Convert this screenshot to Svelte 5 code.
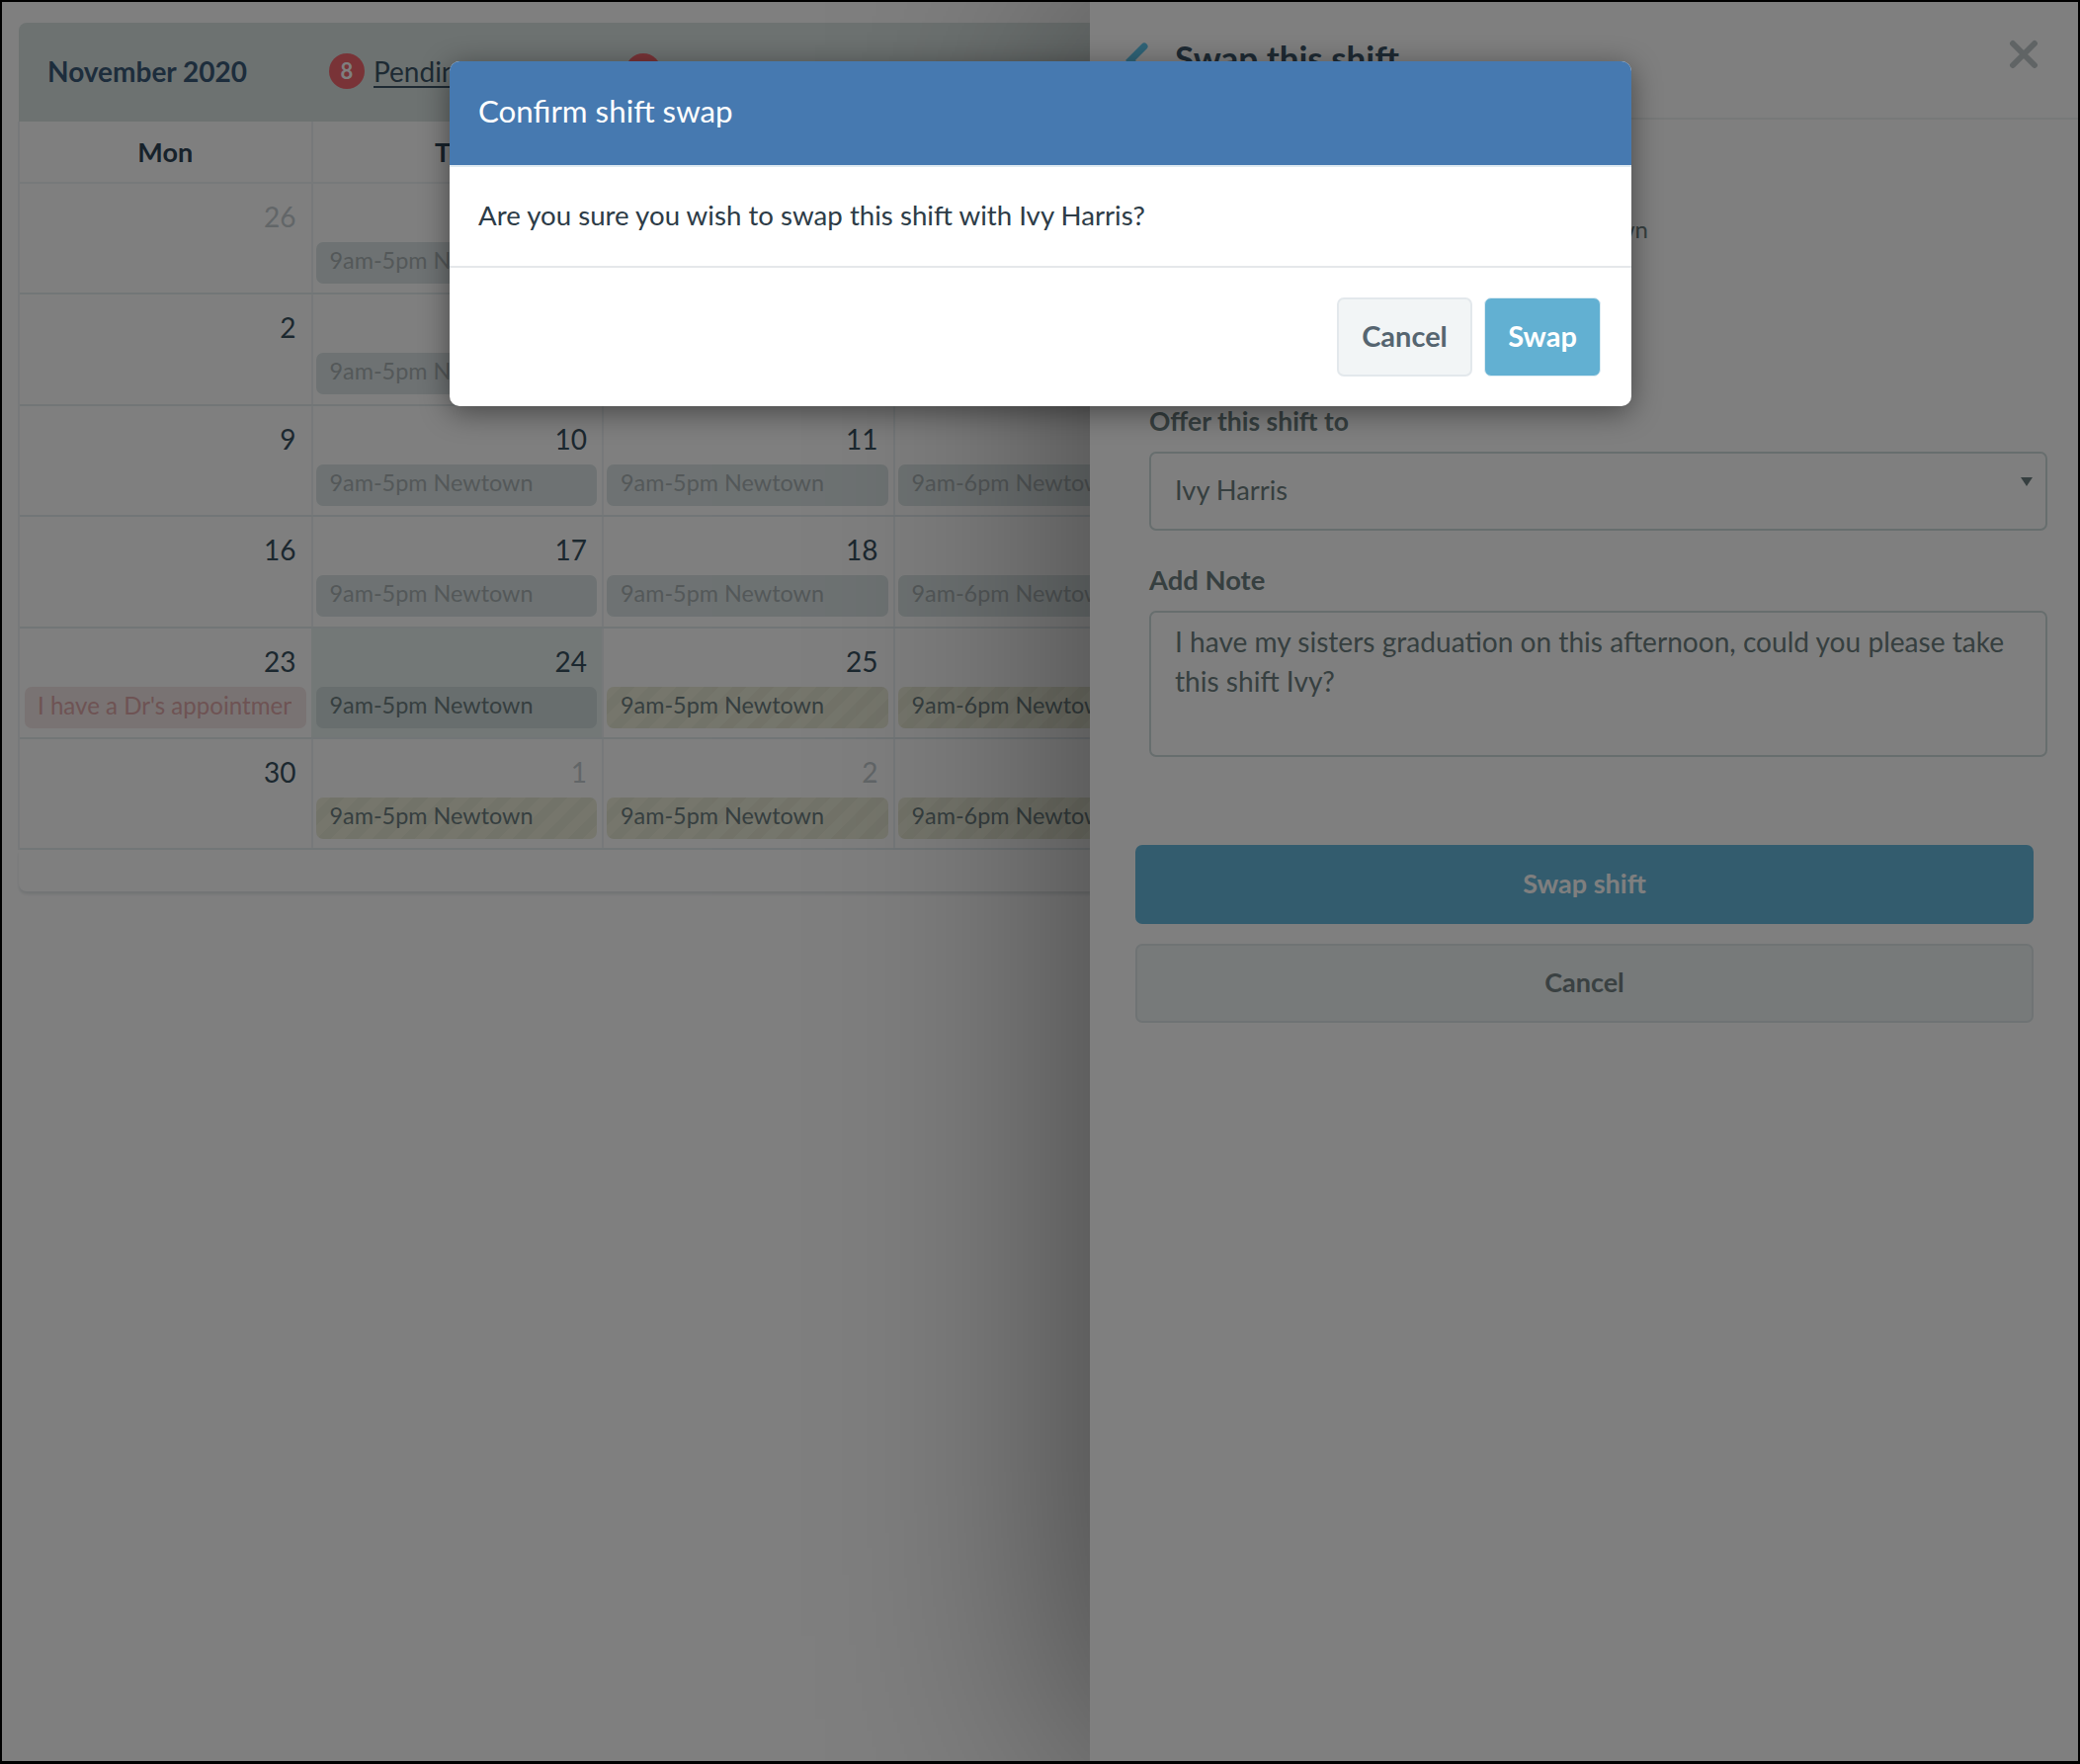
<script>
  const weekdays = ["Mon", "Tue", "Wed", "Thu", "Fri", "Sat", "Sun"];
  const past = "past";
  const today = "today";
  const pending = "pending";

  const shiftsFor = (kind) => [
    null,
    { text: "9am-5pm Newtown", kind },
    { text: "9am-5pm Newtown", kind },
    { text: "9am-6pm Newtown", kind },
    { text: "9am-5pm Newtown", kind },
    null,
    null
  ];

  const weeks = [
    { days: [26, 27, 28, 29, 30, 31, 1], shifts: shiftsFor(past), muted: [0, 1, 2, 3, 4, 5] },
    { days: [2, 3, 4, 5, 6, 7, 8], shifts: shiftsFor(past), muted: [] },
    { days: [9, 10, 11, 12, 13, 14, 15], shifts: shiftsFor(past), muted: [] },
    { days: [16, 17, 18, 19, 20, 21, 22], shifts: shiftsFor(past), muted: [] },
    {
      days: [23, 24, 25, 26, 27, 28, 29],
      shifts: [
        { text: "I have a Dr's appointment", kind: "note" },
        { text: "9am-5pm Newtown", kind: today },
        { text: "9am-5pm Newtown", kind: pending },
        { text: "9am-6pm Newtown", kind: pending },
        { text: "9am-5pm Newtown", kind: pending },
        null,
        null
      ],
      muted: [],
      current: 1
    },
    { days: [30, 1, 2, 3, 4, 5, 6], shifts: shiftsFor(pending), muted: [1, 2, 3, 4, 5, 6] }
  ];
</script>

<div class="page">
  <main class="calendar">
    <header class="month-bar">
      <h1>November 2020</h1>
      <div class="month-link">
        <span class="count">8</span>
        <a href="#pending">Pending Shifts</a>
      </div>
      <div class="month-link second">
        <span class="count">2</span>
        <a href="#requests">Requests</a>
      </div>
    </header>

    <div class="grid">
      {#each weekdays as day}
        <div class="weekday">{day}</div>
      {/each}

      {#each weeks as week}
        {#each week.days as day, i}
          <div class="cell" class:current={week.current === i}>
            <div class="date" class:muted={week.muted.includes(i)}>{day}</div>
            {#if week.shifts[i]}
              <div class="shift {week.shifts[i].kind}">
                <span>{week.shifts[i].text}</span>
              </div>
            {/if}
          </div>
        {/each}
      {/each}
    </div>
    <div class="grid-foot"></div>
  </main>

  <aside class="panel">
    <header class="panel-head">
      <svg class="back" viewBox="0 0 24 36" width="24" height="36" aria-hidden="true">
        <path d="M19 4 L5 18 L19 32" fill="none" stroke="#5fc6ee" stroke-width="7" stroke-linecap="round" />
      </svg>
      <h2>Swap this shift</h2>
      <svg class="close" viewBox="0 0 30 30" width="30" height="30" aria-hidden="true">
        <path d="M4 4 L26 26 M26 4 L4 26" fill="none" stroke="#c0c8ca" stroke-width="6" stroke-linecap="round" />
      </svg>
    </header>

    <div class="panel-body">
      <p class="summary">Tues 24th November 2020, 9am-5pm Newtown</p>

      <label class="offer" for="offer">Offer this shift to</label>
      <div class="select-wrap">
        <select id="offer">
          <option>Ivy Harris</option>
        </select>
        <span class="caret"></span>
      </div>

      <label class="note-label" for="note">Add Note</label>
      <textarea id="note" rows="3">I have my sisters graduation on this afternoon, could you please take this shift Ivy?</textarea>
    </div>

    <div class="panel-actions">
      <button class="primary" type="button">Swap shift</button>
      <button class="secondary" type="button">Cancel</button>
    </div>
  </aside>

  <div class="backdrop"></div>

  <div class="modal">
    <div class="modal-head">Confirm shift swap</div>
    <div class="modal-body">Are you sure you wish to swap this shift with Ivy Harris?</div>
    <div class="modal-foot">
      <button class="btn-cancel" type="button">Cancel</button>
      <button class="btn-swap" type="button">Swap</button>
    </div>
  </div>
</div>

<style>
  :global(body) {
    margin: 0;
    background: #000;
  }

  .page {
    position: relative;
    width: 2105px;
    height: 1785px;
    box-sizing: border-box;
    border: solid #000;
    border-width: 2px 2px 3px 2px;
    background: #fff;
    overflow: hidden;
    font-family: Lato, "Liberation Sans", sans-serif;
    font-size: 24px;
    color: #3c5567;
  }

  .calendar {
    padding: 21px 0 0 17px;
    width: 2080px;
    box-sizing: border-box;
  }

  .month-bar {
    height: 100px;
    display: flex;
    align-items: center;
    padding: 0 0 3px 29px;
    box-sizing: border-box;
    background: #dbe5e3;
    border-radius: 8px 8px 0 0;
  }

  .month-bar h1 {
    margin: 0 83px 0 0;
    font-size: 28px;
    font-weight: 700;
    color: #3b5a78;
  }

  .month-link {
    display: flex;
    align-items: center;
    gap: 9px;
    margin-right: 80px;
  }

  .month-link a {
    color: #3c5567;
    font-size: 28px;
    text-decoration-thickness: 2px;
    text-underline-offset: 4px;
  }

  .count {
    width: 36px;
    height: 36px;
    border-radius: 50%;
    background: #f2666f;
    color: #fff;
    display: flex;
    align-items: center;
    justify-content: center;
    font-size: 22px;
    font-weight: 700;
  }

  .grid {
    display: grid;
    grid-template-columns: repeat(7, 294.5px);
    border-left: 2px solid #eef3f5;
    margin-left: -1px;
  }

  .weekday {
    height: 61px;
    display: flex;
    align-items: center;
    justify-content: center;
    font-size: 27px;
    font-weight: 700;
    color: #2f4556;
    border-right: 2px solid #eef3f5;
    border-bottom: 2px solid #eef3f5;
    margin-right: -2px;
  }

  .cell {
    height: 110.4px;
    padding: 0 5px;
    border-right: 2px solid #eef3f5;
    border-bottom: 2px solid #e4ecef;
    margin-right: -2px;
  }

  .cell.current {
    background: #e7f1ef;
  }

  .date {
    height: 59px;
    padding: 16px 10px 0 0;
    box-sizing: border-box;
    text-align: right;
    font-size: 28px;
    color: #38505f;
  }

  .date.muted {
    color: #c4ccd0;
  }

  .shift {
    height: 42px;
    border-radius: 7px;
    padding: 0 14px;
    line-height: 37px;
    font-size: 23.4px;
    background: #dce5e6;
    color: #a8b1b3;
  }

  .shift span {
    display: block;
    white-space: nowrap;
    overflow: hidden;
  }

  .shift.today {
    background: #d0dcdc;
    color: #6d7e80;
  }

  .shift.pending {
    background: repeating-linear-gradient(135deg, #ecedd9 0 10px, #e5e6d2 10px 20px);
    color: #6d7e80;
  }

  .shift.note {
    background: #f3e7e7;
    color: #dda6a8;
    font-size: 24.1px;
    padding: 0 15px 0 13px;
  }

  .grid-foot {
    height: 42px;
    border-radius: 0 0 8px 8px;
    box-shadow: 0 3px 3px rgba(120, 140, 150, 0.2);
  }

  .panel {
    position: absolute;
    top: 0;
    right: 0;
    bottom: 0;
    width: 1000px;
    background: #fff;
    box-shadow: 0 0 400px rgba(0, 0, 0, 0.5);
  }

  .panel-head {
    height: 119px;
    box-sizing: border-box;
    padding: 41px 0 0 36px;
    display: flex;
    align-items: flex-start;
    gap: 26px;
    border-bottom: 2px solid #eef2f3;
    position: relative;
  }

  .panel-head h2 {
    margin: 0;
    font-size: 35px;
    line-height: 30px;
    font-weight: 700;
    color: #3c5567;
  }

  .close {
    position: absolute;
    top: 38px;
    right: 40px;
  }

  .panel-body {
    padding: 96px 31px 0 60px;
  }

  .summary {
    margin: 0 0 163px;
    line-height: 30px;
    white-space: nowrap;
    color: #6d7e80;
  }

  label {
    display: block;
    font-size: 26.5px;
    font-weight: 700;
    line-height: 32px;
    color: #6d7e80;
    margin-bottom: 15px;
  }

  .note-label {
    font-size: 27.4px;
  }

  .select-wrap {
    position: relative;
    margin-bottom: 34px;
  }

  select {
    display: block;
    width: 100%;
    height: 80px;
    box-sizing: border-box;
    appearance: none;
    background: #fff;
    border: 2px solid #cfdcdc;
    border-radius: 7px;
    padding: 0 24px 4px;
    font: inherit;
    color: #6d7e80;
    font-size: 27.3px;
  }

  .caret {
    position: absolute;
    top: 26px;
    right: 15px;
    border: solid transparent;
    border-width: 9px 6px 0;
    border-top-color: #6d7e80;
  }

  textarea {
    display: block;
    width: 100%;
    height: 148px;
    box-sizing: border-box;
    background: #fff;
    border: 2px solid #cfdcdc;
    border-radius: 7px;
    padding: 9px 24px;
    font: inherit;
    font-size: 28.1px;
    line-height: 40px;
    color: #6d7e80;
    resize: none;
    outline: none;
  }

  .panel-actions {
    padding: 89px 45px 0 46px;
    display: flex;
    flex-direction: column;
    gap: 20px;
  }

  .panel-actions button {
    height: 80px;
    border-radius: 7px;
    font: inherit;
    font-size: 27px;
    font-weight: 700;
    padding-bottom: 4px;
  }

  .primary {
    background: #66b8dc;
    border: none;
    color: #fff;
  }

  .secondary {
    background: #eef5f5;
    border: 2px solid #dfe7e8;
    color: #748284;
  }

  .backdrop {
    position: absolute;
    inset: 0;
    background: rgba(0, 0, 0, 0.5);
  }

  .modal {
    position: absolute;
    left: 453px;
    top: 60px;
    width: 1196px;
    height: 349px;
    background: #fff;
    border-radius: 10px;
    overflow: hidden;
    box-shadow: 0 6px 30px rgba(0, 0, 0, 0.45);
  }

  .modal-head {
    height: 107px;
    box-sizing: border-box;
    padding: 0 29px 5px;
    display: flex;
    align-items: center;
    background: #4679b0;
    border-bottom: 2px solid #dfeaf0;
    color: #fff;
    font-size: 31.3px;
  }

  .modal-body {
    height: 102px;
    box-sizing: border-box;
    padding: 0 29px 3px;
    display: flex;
    align-items: center;
    border-bottom: 2px solid #e5e8ea;
    font-size: 27.66px;
    color: #2d3c47;
  }

  .modal-foot {
    display: flex;
    justify-content: flex-end;
    gap: 12px;
    padding: 30px 31px 0 0;
  }

  .modal-foot button {
    height: 80px;
    border-radius: 7px;
    font: inherit;
    font-size: 29px;
    font-weight: 700;
    padding-bottom: 5px;
  }

  .btn-cancel {
    width: 137px;
    background: #f2f5f6;
    border: 2px solid #e3e8ec;
    color: #566570;
  }

  .btn-swap {
    width: 118px;
    background: #62b0d2;
    border: 1px solid #dcecf3;
    color: #fff;
  }
</style>
